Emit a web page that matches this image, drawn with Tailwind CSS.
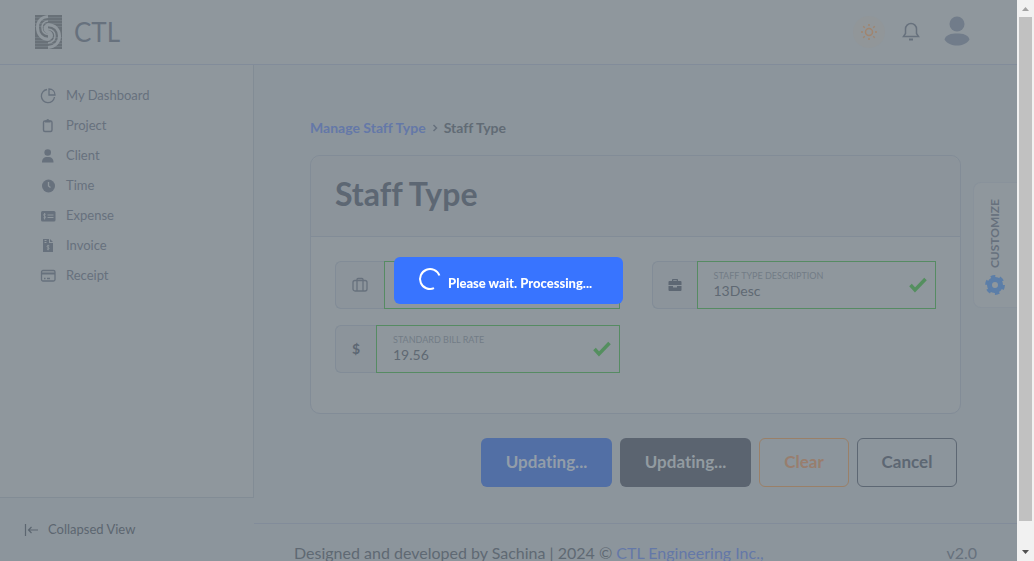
<!DOCTYPE html>
<html lang="en">
<head>
<meta charset="utf-8">
<title>CTL - Staff Type</title>
<script src="https://cdn.jsdelivr.net/npm/@tailwindcss/browser@4"></script>
</head>
<body class="h-screen overflow-hidden bg-[#8c959c] font-['Lato',sans-serif] text-[13px] text-[#67717d] [font-variant-ligatures:none]">
<div class="flex h-full">
  <div class="flex min-w-0 flex-1 flex-col">
    <header class="flex h-[65px] shrink-0 items-center justify-between border-b border-[#828c9a] bg-[#8f979d] pr-[47px] pl-[35px]">
      <a href="#" class="flex items-center gap-3">
        <svg class="h-[34px] w-[27px]" viewBox="0 0 27 34" fill="none">
          <path fill="#697178" d="M0 0h27v34H0z"/>
          <path stroke="#747d84" stroke-width="1" d="M0 2.500h27M0 5.500h27M0 8.500h27M0 11.500h27M0 22.500h27M0 25.500h27M0 28.500h27M0 31.500h27"/>
          <path stroke="#8f979d" stroke-width="3" d="M13 1.500C6.500 2 2.500 6 2.500 12.500S6.500 24 13 24.500M13 9.500c7 .5 11.500 5 11.500 11.500S20 32 13 32.500"/>
          <path stroke="#8f979d" stroke-width="1.500" d="M13 6C9 6.500 7 9 7 12.500s2 6.500 6 7M13 14c4 .5 7 3 7 7s-3 6.500-7 7"/>
          <path fill="#8f979d" d="M13 8v11c-3-1-4.500-3-4.500-5.500S10 9 13 8zM13 15c3 .5 5 3 5 5.500S16 25 13 26z"/>
        </svg>
        <span class="text-[26px] leading-7">CTL</span>
      </a>
      <div class="flex items-center">
        <button aria-label="Theme" class="flex size-8 items-center justify-center rounded-full bg-[#919699] text-[#a0856f]">
          <svg class="size-4" viewBox="0 0 16 16" fill="none" stroke="currentColor" stroke-width="1.500"><circle cx="8" cy="8" r="3.500"/><path d="M8 0v2M8 14v2M0 8h2M14 8h2M2.300 2.300l1.400 1.400M12.300 12.300l1.400 1.400M2.300 13.700l1.400-1.400M12.300 3.700l1.400-1.400"/></svg>
        </button>
        <button aria-label="Notifications" class="ml-4 flex h-8 w-5 items-center justify-center">
          <svg class="h-5 w-[18px]" viewBox="0 0 18 20" fill="none" stroke="currentColor" stroke-width="1.500"><path d="M1.500 14.500h15l-2-3V7A5.500 5.500 0 0 0 9 1.500 5.500 5.500 0 0 0 3.500 7v4.500z"/><path d="M7 17.500h4" stroke-width="2"/></svg>
        </button>
        <button aria-label="Account" class="ml-[23px] flex h-10 w-[26px] items-start justify-center pt-1">
          <svg class="h-[30px] w-[26px]" viewBox="0 0 26 30" fill="#717c8a"><circle cx="13" cy="8" r="7.500"/><path d="M.5 23.500C2 18.500 7 17.500 13 17.500s11 1 12.500 6C23 27.500 18 29.500 13 29.500S3 27.500.5 23.500z"/></svg>
        </button>
      </div>
    </header>

    <div class="flex min-h-0 flex-1">
      <aside class="flex w-[254px] shrink-0 flex-col">
        <nav class="flex-1 border-r border-b border-[#828c95] bg-[#8f979d] pt-4 pl-10">
          <a href="#" class="flex h-[30px] items-center gap-[10px]"><svg class="size-4" viewBox="0 0 16 16" fill="none" stroke="currentColor" stroke-width="1.300"><path d="M7 1.500A6.600 6.600 0 1 0 14.500 9M9 1v6h6C15 3.500 12.500 1 9 1z"/></svg>My Dashboard</a>
          <a href="#" class="flex h-[30px] items-center gap-[10px]"><svg class="size-4" viewBox="0 0 16 16" fill="none" stroke="currentColor" stroke-width="1.400"><rect x="3.500" y="3" width="8.500" height="10.500" rx="1.500"/><path d="M5 2.500h5.500v2H5z" fill="currentColor" stroke="none"/><circle cx="7.750" cy="2.500" r="1.500" fill="currentColor" stroke="none"/></svg>Project</a>
          <a href="#" class="flex h-[30px] items-center gap-[10px]"><svg class="size-4" viewBox="0 0 16 16" fill="currentColor"><circle cx="7.700" cy="4.500" r="3.300"/><path d="M2 14.500c0-3.500 1.500-5.500 5.700-5.500s5.800 2 5.800 5.500z"/></svg>Client</a>
          <a href="#" class="flex h-[30px] items-center gap-[10px]"><svg class="size-4" viewBox="0 0 16 16"><circle cx="8.500" cy="8" r="6.500" fill="currentColor"/><path d="M8.500 4v4l2 1.500" fill="none" stroke="#8f979d" stroke-width="1.300"/></svg>Time</a>
          <a href="#" class="flex h-[30px] items-center gap-[10px]"><svg class="size-4" viewBox="0 0 16 16"><rect x="1" y="3" width="14.500" height="10.500" rx="1.500" fill="currentColor"/><path d="M7.500 7h6M7.500 9.500h6M5.700 6.300c-1.800-.8-2.600.5-1.800 1.300l1.500 1c1 .8-.4 2-1.900 1.200M4.600 5v6.500" fill="none" stroke="#8f979d"/></svg>Expense</a>
          <a href="#" class="flex h-[30px] items-center gap-[10px]"><svg class="size-4" viewBox="0 0 16 16"><path d="M3 1h6v4h4v9H3zM10 1l3 3h-3z" fill="currentColor"/><path d="M4.500 2.500h2M4.500 4.500h2M9.300 7.800c-1.800-.8-2.800.3-1.900 1.200l1.300.8c1 .8-.3 2-1.800 1.200M8.100 6.800v5.500" fill="none" stroke="#8f979d"/></svg>Invoice</a>
          <a href="#" class="flex h-[30px] items-center gap-[10px]"><svg class="size-4" viewBox="0 0 16 16" fill="none" stroke="currentColor" stroke-width="1.300"><rect x="1.500" y="2.500" width="13.500" height="10.500" rx="1.500"/><path d="M1.500 5.500h13.500" stroke-width="2"/><path d="M4 10.500h1.500M7 10.500h3"/></svg>Receipt</a>
        </nav>
        <button class="flex h-[63px] shrink-0 items-center gap-2 pl-6 text-left text-[#5c6670]"><svg class="size-4" viewBox="0 0 16 16" fill="none" stroke="currentColor" stroke-width="1.200"><path d="M1.500 2v12M14 8H4.500M7.500 5l-3 3 3 3"/></svg>Collapsed View</button>
      </aside>

      <div class="flex min-w-0 flex-1 flex-col">
        <main class="flex-1 pt-[53px] pr-14 pl-14">
          <nav aria-label="Breadcrumb" class="flex h-5 items-center gap-[6px] text-sm font-bold">
            <a href="#" class="text-[#6478a8]">Manage Staff Type</a>
            <svg class="h-2 w-[6px]" viewBox="0 0 6 8" fill="none" stroke="currentColor" stroke-width="1.500"><path d="M1.500 1l3 3-3 3"/></svg>
            <span class="text-[#616b75]">Staff Type</span>
          </nav>
          <section class="mt-[17px] h-[259px] rounded-[10px] border border-[#828c97] bg-[#8f979d]">
            <div class="h-[81px] rounded-t-[10px] border-b border-[#828c97] bg-[#8c949b] px-6 pt-5">
              <h1 class="text-[32px] leading-9 font-bold text-[#5d6773]">Staff Type</h1>
            </div>
            <form class="grid grid-cols-2 gap-x-8 gap-y-4 px-6 pt-6 text-sm">
              <div class="flex h-12">
                <span class="flex w-[49px] shrink-0 items-center justify-center rounded-l-md border border-r-0 border-[#828c97] bg-[#8c949b]"><svg class="size-4" viewBox="0 0 16 16" fill="none" stroke="currentColor" stroke-width="1.300"><rect x="1" y="3.500" width="14" height="10.500" rx="2"/><path d="M5 14V2.500Q5 1.500 6 1.500h4q1 0 1 1V14"/></svg></span>
                <div class="flex min-w-0 flex-1 flex-col border border-[#568b63] px-4 pt-2"><label for="st" class="text-[9px] leading-3">STAFF TYPE</label><input id="st" value="13" class="w-full leading-4"></div>
              </div>
              <div class="flex h-12">
                <span class="flex w-[45px] shrink-0 items-center justify-center rounded-l-md border border-r-0 border-[#828c97] bg-[#8c949b] text-[#5d6773]"><svg class="h-3.5 w-3.5" viewBox="0 0 14 14" fill="currentColor"><path d="M4 3V1.500Q4 1 5 1h4q1 0 1 .5V3h2.500q1 0 1 1v3H.5V4q0-1 1-1zM5.200 3h3.600v-.8H5.200zM.5 8H5v1.500h4V8h4.500v4q0 1-1 1h-11q-1 0-1-1z"/></svg></span>
                <div class="flex min-w-0 flex-1 items-center border border-[#568b63] pr-2 pl-4">
                  <div class="flex min-w-0 flex-1 flex-col"><label for="sd" class="text-[9px] leading-3 text-[#727c86]">STAFF TYPE DESCRIPTION</label><input id="sd" value="13Desc" class="w-full leading-[18px] text-[#5f6973]"></div>
                  <svg class="h-4 w-[18px]" viewBox="0 0 18 16" fill="none" stroke="#548f5f" stroke-width="3.500"><path d="M1.500 8l4.500 5L16.500 2"/></svg>
                </div>
              </div>
              <div class="flex h-12">
                <span class="flex w-[41px] shrink-0 items-center justify-center rounded-l-md border border-r-0 border-[#828c97] bg-[#8c949b] text-sm font-bold text-[#5d6773]">$</span>
                <div class="flex min-w-0 flex-1 items-center border border-[#568b63] pr-2 pl-4">
                  <div class="flex min-w-0 flex-1 flex-col"><label for="sr" class="text-[9px] leading-3 text-[#727c86]">STANDARD BILL RATE</label><input id="sr" value="19.56" class="w-full leading-[18px] text-[#5f6973]"></div>
                  <svg class="h-4 w-[18px]" viewBox="0 0 18 16" fill="none" stroke="#548f5f" stroke-width="3.500"><path d="M1.500 8l4.500 5L16.500 2"/></svg>
                </div>
              </div>
            </form>
          </section>
          <div class="mt-6 flex h-[49px] justify-end gap-2 pr-1 text-[17px] leading-6 font-bold">
            <button class="w-[131px] rounded-md bg-[#526fa5] pb-[2px] text-[#929da9]">Updating...</button>
            <button class="w-[131px] rounded-md bg-[#5b6470] pb-[2px] text-[#929ba1]">Updating...</button>
            <button class="w-[90px] rounded-md border border-[#9a8068] pb-[2px] text-[#987e6e]">Clear</button>
            <button class="w-[100px] rounded-md border border-[#5d6773] pb-[2px] text-[#5d6773]">Cancel</button>
          </div>
        </main>
        <footer class="flex h-[38px] shrink-0 justify-between border-t border-[#828c9a] pt-[19px] pr-10 pl-10 text-base leading-5 text-[#5f6973]">
          <p>Designed and developed by Sachina | 2024 © <a href="#" class="text-[#6478a8]">CTL Engineering Inc.,</a></p>
          <span class="text-[#67717d]">v2.0</span>
        </footer>
      </div>
    </div>
  </div>
  <div aria-hidden="true" class="flex w-[17px] shrink-0 flex-col items-center bg-[#f1f1f1]">
    <svg class="h-[17px] w-[17px] shrink-0" viewBox="0 0 17 17"><path d="M5 11h7L8.500 7z" fill="#a3a3a3"/></svg>
    <div class="w-[13px] flex-1 bg-[#c1c1c1]"></div>
    <div class="h-[23px] shrink-0"></div>
    <svg class="h-[17px] w-[17px] shrink-0" viewBox="0 0 17 17"><path d="M5 6h7l-3.500 4z" fill="#505050"/></svg>
  </div>
</div>

<button class="fixed top-[182px] right-[17px] flex h-[126px] w-11 flex-col items-center justify-between rounded-l-lg border border-r-0 border-[#89929b] bg-[#8f979d] pt-4 pr-[2px] pb-3">
  <span class="rotate-180 text-xs leading-4 font-bold [writing-mode:vertical-rl]">CUSTOMIZE</span>
  <svg class="size-5" viewBox="0 0 20 20" fill="none" stroke="#5c7ea8"><circle cx="10" cy="10" r="5.500" stroke-width="5"/><circle cx="10" cy="10" r="8.400" stroke-width="3" stroke-dasharray="4.400 4.400"/></svg>
</button>

<div class="fixed top-[257px] right-[17px] left-0 flex justify-center">
  <div role="status" class="flex h-[47px] w-[229px] gap-[6px] rounded-md bg-[#3874ff] pt-[10px] pl-6 font-black whitespace-nowrap text-white">
    <svg class="size-6" viewBox="0 0 24 24" fill="none" stroke="currentColor" stroke-width="2"><path d="M21.400 8.500A10 10 0 1 0 16 21.200"/></svg>
    <span class="pt-[6px] leading-5">Please wait. Processing...</span>
  </div>
</div>
</body>
</html>
